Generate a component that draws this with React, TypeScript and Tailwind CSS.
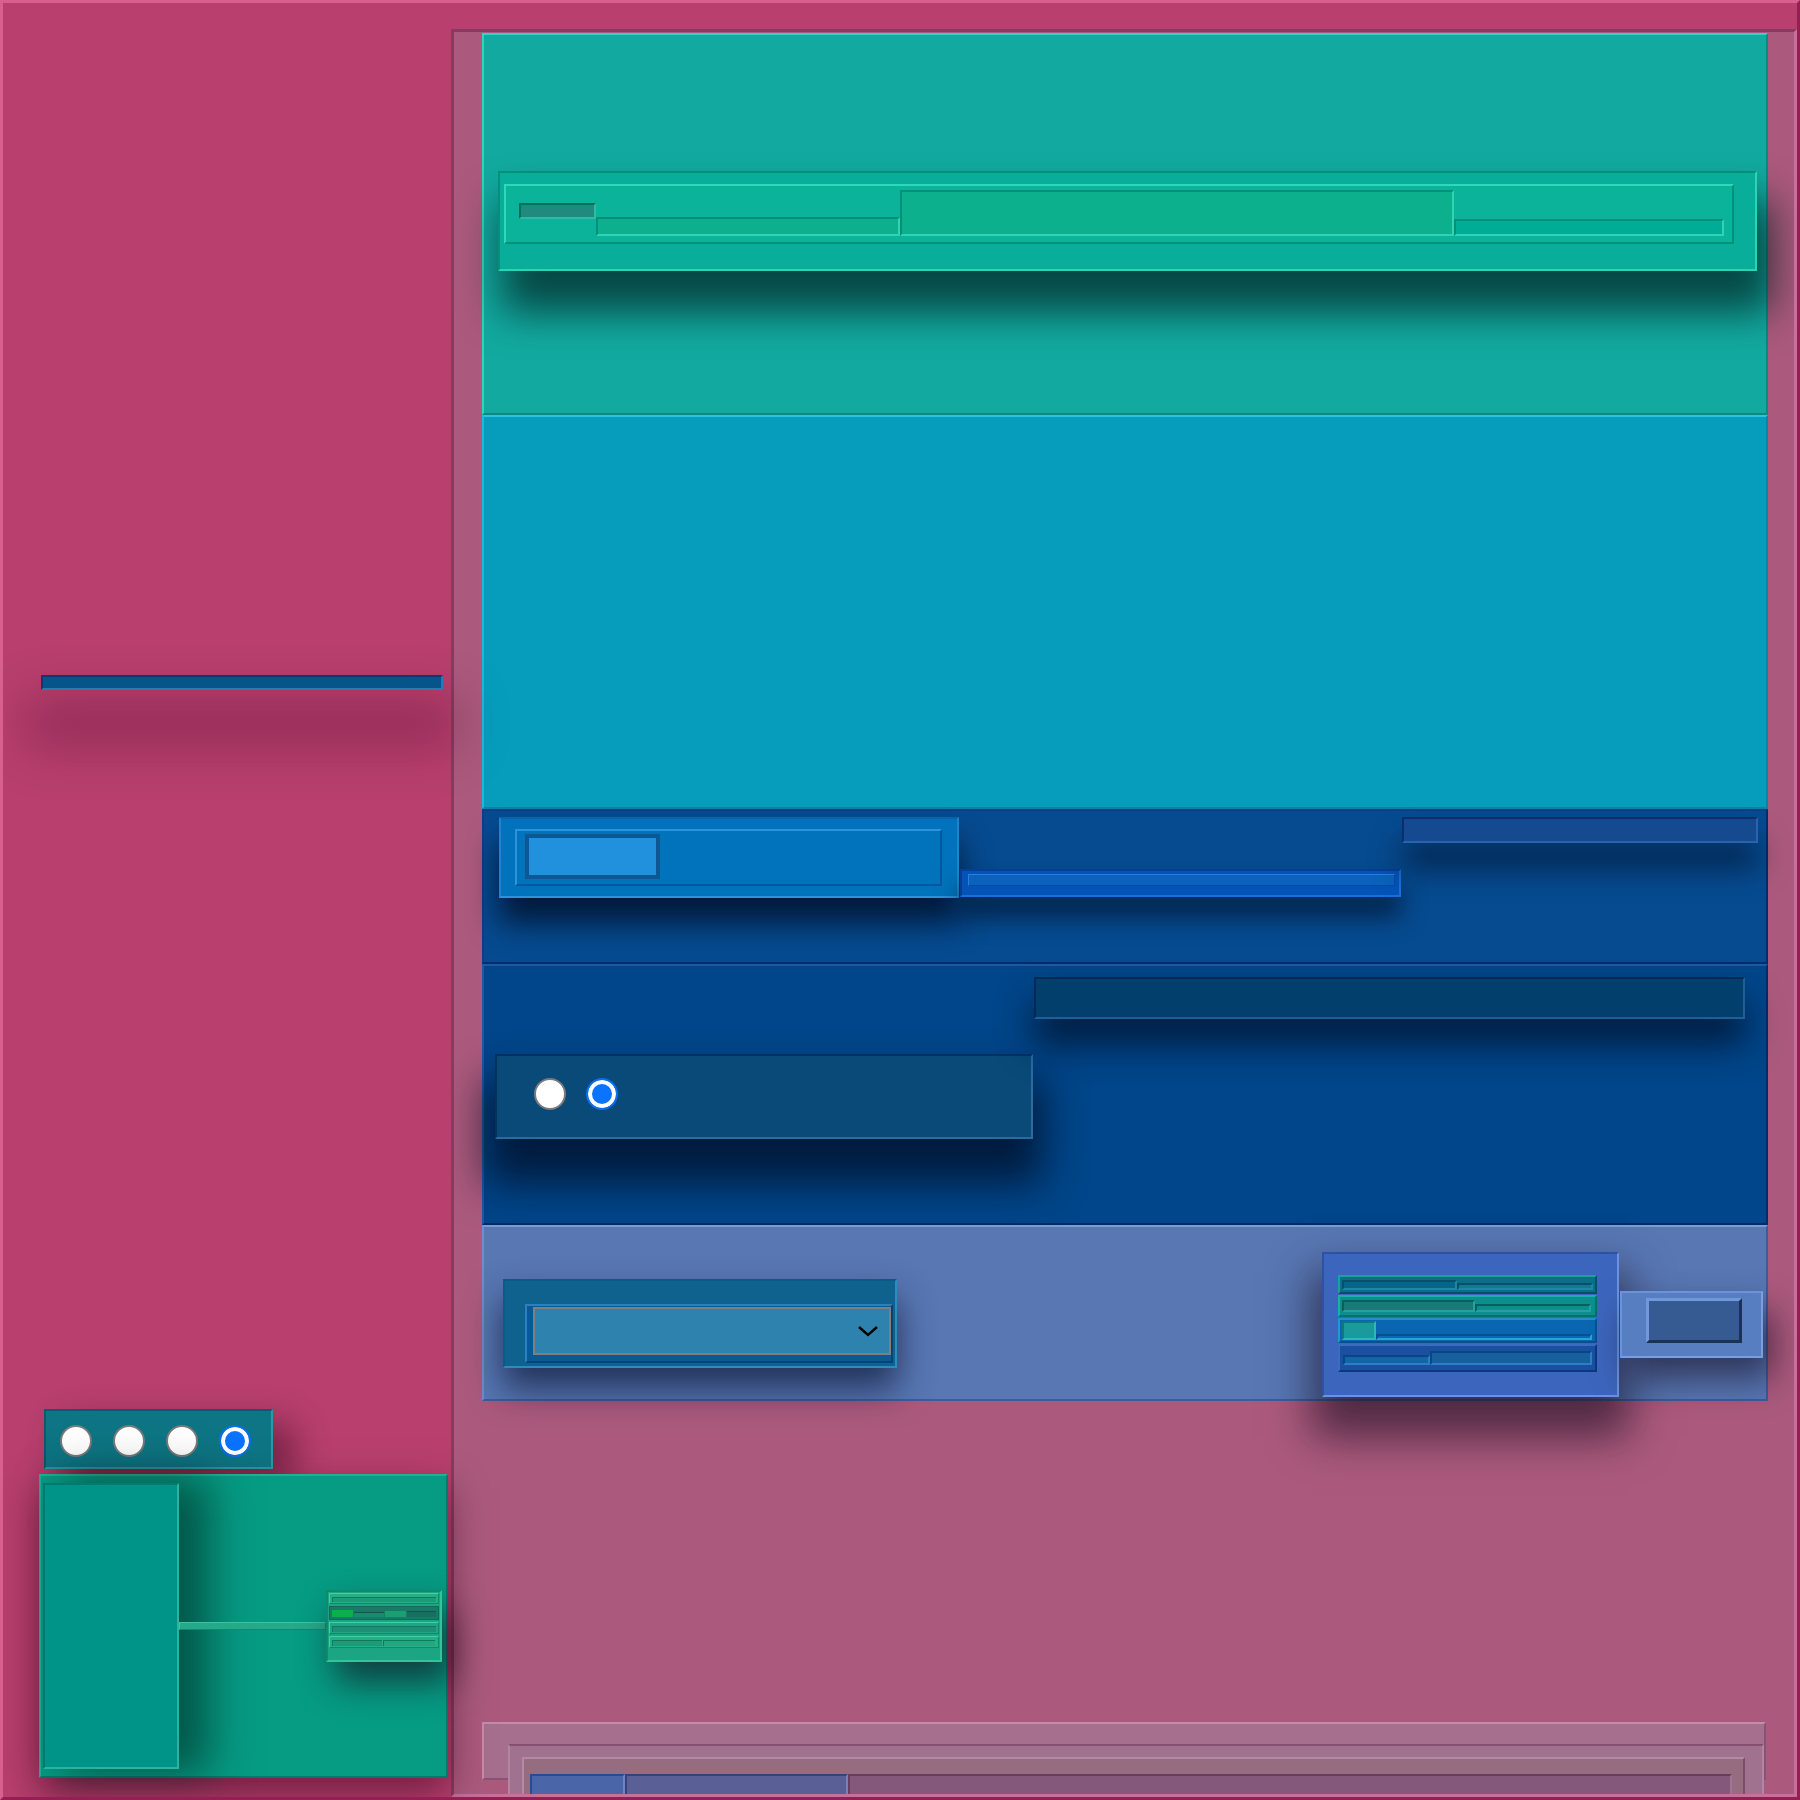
import React from "react";

function Radio({ on }: { on?: boolean }) {
  if (on) {
    return (
      <span className="block h-[32px] w-[32px] shrink-0 rounded-full border-2 border-[#0a6ef0] bg-[#0a73ff] shadow-[inset_0_0_0_4px_#ffffff]" />
    );
  }
  return <span className="block h-[32px] w-[32px] shrink-0 rounded-full border-2 border-[#7a7a7a] bg-white" />;
}

function LeftColumn() {
  return (
    <div className="relative z-10 flex w-[448px] shrink-0 flex-col">
      <div className="ml-[38px] mt-[672px] h-[15px] w-[402px] border-2 border-t-[#0b3a74] border-l-[#0b3a74] border-b-[#2a7ab2] border-r-[#2a7ab2] bg-[#06548a] shadow-[0_40px_50px_15px_rgba(70,10,40,0.35)]" />
      <div className="flex-1" />
      <div className="ml-[41px] flex h-[60px] w-[229px] items-center gap-[21px] border-2 border-t-[#0a5a70] border-l-[#0a5a70] border-b-[#2a9aa8] border-r-[#2a9aa8] bg-[#0e7584] pl-[14px] pt-[4px] shadow-[20px_15px_35px_rgba(40,0,20,0.45)]">
        <Radio />
        <Radio />
        <Radio />
        <Radio on />
      </div>
      <div className="mb-[19px] ml-[36px] mt-[5px] flex h-[304px] w-[409px] items-center border-2 border-t-[#1fb096] border-l-[#1fb096] border-b-[#057a68] border-r-[#057a68] bg-[#069b83] py-[7px] pl-[2px] shadow-[0_15px_35px_rgba(40,0,20,0.5)]">
        <div className="h-full w-[136px] shrink-0 self-stretch border-2 border-t-[#007a70] border-l-[#007a70] border-b-[#2ab3a3] border-r-[#2ab3a3] bg-[#009488] shadow-[25px_0_40px_5px_rgba(0,30,25,0.55)]" />
        <div className="h-[8px] w-[147px] shrink-0 border border-t-[#3cc49f] border-l-[#3cc49f] border-b-[#0d8a70] border-r-[#0d8a70] bg-[#25a98b]" />
        <div className="flex h-[72px] w-[116px] shrink-0 flex-col gap-[2px] border-2 border-t-[#0f8a6e] border-l-[#0f8a6e] border-b-[#35c39a] border-r-[#35c39a] bg-[#1ca583] p-[1px] shadow-[10px_20px_35px_rgba(20,0,20,0.6)]">
          <div className="flex h-[11px] items-end border border-t-[#3fd0a4] border-l-[#3fd0a4] border-b-[#0f8a6c] border-r-[#0f8a6c] bg-[#22b085] px-[2px] pb-[1px]">
            <div className="h-[5px] w-full border-t border-l border-t-[#0f7a60] border-l-[#0f7a60] bg-[#1f9a78]" />
          </div>
          <div className="flex h-[14px] items-end gap-[1px] border border-[#116a5a] bg-[#1a7a68] px-[2px] pb-[2px]">
            <div className="h-[7px] w-[22px] bg-[#0ab04a]" />
            <div className="h-[5px] w-[30px] border-t border-t-[#0c5a4a] bg-[#1a8a70]" />
            <div className="h-[6px] w-[22px] bg-[#1aa070]" />
            <div className="h-[6px] w-[30px] border-t border-t-[#0c5a4a] bg-[#157060]" />
          </div>
          <div className="flex h-[12px] items-end border border-t-[#3fd0a4] border-l-[#3fd0a4] border-b-[#0f8a6c] border-r-[#0f8a6c] bg-[#22a585] px-[2px] pb-[1px]">
            <div className="h-[6px] w-full border-t border-l border-t-[#0f7a60] border-l-[#0f7a60] bg-[#1f9075]" />
          </div>
          <div className="flex h-[12px] items-end gap-[1px] border border-t-[#3fd0a4] border-l-[#3fd0a4] border-b-[#0f8a6c] border-r-[#0f8a6c] bg-[#22b085] px-[2px] pb-[1px]">
            <div className="h-[6px] w-[50px] border-t border-l border-t-[#0f7a60] border-l-[#0f7a60] bg-[#1f9a78]" />
            <div className="h-[6px] w-[52px] border-t border-l border-t-[#0f7a60] border-l-[#0f7a60] bg-[#24a67e]" />
          </div>
        </div>
      </div>
    </div>
  );
}

function TealSection() {
  return (
    <div className="h-[382px] shrink-0 border-2 border-t-[#2fd3c3] border-l-[#2fd3c3] border-b-[#0c8a82] border-r-[#0c8a82] bg-[#12aaa0] pl-[14px] pt-[136px]">
      <div className="h-[100px] w-[1259px] border-2 border-t-[#00907c] border-l-[#00907c] border-b-[#2cd4b6] border-r-[#2cd4b6] bg-[#08ae9a] pl-[4px] pt-[11px] shadow-[10px_35px_40px_6px_rgba(0,30,30,0.7)]">
        <div className="flex h-[60px] w-[1230px] items-end border-2 border-t-[#30d8ba] border-l-[#30d8ba] border-b-[#00907b] border-r-[#00907b] bg-[#0ab39a] pb-[6px] pl-[13px]">
          <div className="mt-[17px] h-[16px] w-[77px] self-start border-2 border-t-[#03705e] border-l-[#03705e] border-b-[#34b8a4] border-r-[#34b8a4] bg-[#1f8a7e]" />
          <div className="h-[19px] w-[304px] border-2 border-t-[#019079] border-l-[#019079] border-b-[#2fd4b4] border-r-[#2fd4b4] bg-[#0cb08e]" />
          <div className="h-[46px] w-[554px] border-2 border-t-[#019079] border-l-[#019079] border-b-[#2fd4b4] border-r-[#2fd4b4] bg-[#0db08c]" />
          <div className="h-[17px] w-[270px] border-2 border-t-[#019079] border-l-[#019079] border-b-[#2fd4b4] border-r-[#2fd4b4] bg-[#00ac95]" />
        </div>
      </div>
    </div>
  );
}

function BlueSection() {
  return (
    <div className="flex h-[155px] shrink-0 items-start border-2 border-t-[#0e3f86] border-l-[#0e3f86] border-b-[#022d68] border-r-[#022d68] bg-[#064b90] pl-[15px] pt-[6px]">
      <div className="h-[81px] w-[460px] shrink-0 border-2 border-t-[#0a62a8] border-l-[#1b86cf] border-b-[#2a94da] border-r-[#1b86cf] bg-[#0173bc] pl-[14px] pt-[10px] shadow-[0_25px_30px_rgba(0,10,30,0.75)]">
        <div className="h-[57px] w-[427px] border-2 border-t-[#2b94dc] border-l-[#2b94dc] border-b-[#0558a0] border-r-[#0558a0] bg-[#0073bd] pl-[8px] pt-[3px]">
          <div className="h-[45px] w-[135px] border-[4px] border-[#0b5893] bg-[#2191dd]" />
        </div>
      </div>
      <div className="ml-[1px] mt-[52px] h-[28px] w-[441px] shrink-0 border-2 border-t-[#063e96] border-l-[#063e96] border-b-[#1b6fd2] border-r-[#1b6fd2] bg-[#0453b9] pl-[6px] pt-[3px] shadow-[0_20px_25px_rgba(0,10,30,0.6)]">
        <div className="h-[12px] w-[427px] border border-t-[#2a82d8] border-l-[#2a82d8] border-b-[#0848a0] border-r-[#0848a0] bg-[#0a62bc]" />
      </div>
      <div className="ml-[1px] h-[26px] w-[356px] shrink-0 border-2 border-t-[#0a2e6c] border-l-[#0a2e6c] border-b-[#2c62ac] border-r-[#2c62ac] bg-[#154a91] shadow-[0_25px_30px_rgba(0,10,30,0.6)]" />
    </div>
  );
}

function NavySection() {
  return (
    <div className="flex h-[261px] shrink-0 items-start border-2 border-t-[#1c5aa2] border-l-[#1c5aa2] border-b-[#012c66] border-r-[#012c66] bg-[#01468a] pl-[11px] pt-[11px]">
      <div className="mt-[77px] flex h-[85px] w-[538px] shrink-0 items-center gap-[20px] border-2 border-t-[#033260] border-l-[#033260] border-b-[#2b6ba0] border-r-[#2b6ba0] bg-[#094a78] pb-[6px] pl-[37px] shadow-[0_35px_40px_10px_rgba(0,10,30,0.7)]">
        <Radio />
        <Radio on />
      </div>
      <div className="ml-[1px] h-[42px] w-[711px] shrink-0 border-2 border-t-[#022a55] border-l-[#022a55] border-b-[#1f5f96] border-r-[#1f5f96] bg-[#033f6d] shadow-[0_25px_35px_rgba(0,10,30,0.7)]" />
    </div>
  );
}

function MiniList() {
  return (
    <div className="flex h-[97px] w-[259px] flex-col gap-[1px]">
      <div className="flex h-[19px] items-end border-2 border-t-[#17a3a3] border-l-[#17a3a3] border-b-[#0a4f66] border-r-[#0a4f66] bg-[#0c6f88] px-[2px] pb-[2px]">
        <div className="h-[10px] w-[115px] border-2 border-t-[#05506e] border-l-[#05506e] border-b-[#1a88a0] border-r-[#1a88a0] bg-[#06658a]" />
        <div className="h-[7px] w-[136px] border-2 border-t-[#05506e] border-l-[#05506e] border-b-[#1a88a0] border-r-[#1a88a0] bg-[#177791]" />
      </div>
      <div className="flex h-[23px] items-end border-2 border-t-[#1ab0a8] border-l-[#1ab0a8] border-b-[#06706a] border-r-[#06706a] bg-[#0a8e8e] px-[2px] pb-[3px]">
        <div className="h-[12px] w-[133px] border-2 border-t-[#0a5e5c] border-l-[#0a5e5c] border-b-[#22a3a0] border-r-[#22a3a0] bg-[#1a7a78]" />
        <div className="h-[8px] w-[116px] border-2 border-t-[#0a5e5c] border-l-[#0a5e5c] border-b-[#22a3a0] border-r-[#22a3a0] bg-[#0a8e8e]" />
      </div>
      <div className="flex h-[25px] items-end border-2 border-t-[#2a8ad0] border-l-[#1d9ccc] border-b-[#0a4f90] border-r-[#0a4f90] bg-[#0a66b0] px-[2px] pb-[1px]">
        <div className="h-[19px] w-[34px] border-2 border-t-[#0a7a80] border-l-[#0a7a80] border-b-[#2ab8b8] border-r-[#2ab8b8] bg-[#1a9a9c]" />
        <div className="h-[6px] w-[216px] border-2 border-t-[#0a4f90] border-l-[#0a4f90] border-b-[#24a6d4] border-r-[#24a6d4] bg-[#0d68b2]" />
      </div>
      <div className="flex h-[29px] items-end border-2 border-t-[#3a6cc0] border-l-[#3a6cc0] border-b-[#0c3782] border-r-[#0c3782] bg-[#1b4fa0] px-[3px] pb-[5px]">
        <div className="h-[10px] w-[87px] border-2 border-t-[#0a4585] border-l-[#0a4585] border-b-[#2a80c4] border-r-[#2a80c4] bg-[#1465a5]" />
        <div className="h-[14px] w-[162px] border-2 border-t-[#0a4585] border-l-[#0a4585] border-b-[#2a80c4] border-r-[#2a80c4] bg-[#185f9e]" />
      </div>
    </div>
  );
}

function LavenderSection() {
  return (
    <div className="flex h-[176px] shrink-0 items-start border-2 border-t-[#7d9ad2] border-l-[#6f8dca] border-b-[#3d5c9a] border-r-[#3d5c9a] bg-[#5877b3] pl-[19px] pr-[3px]">
      <div className="mt-[52px] h-[89px] w-[394px] shrink-0 border-2 border-t-[#0c5a88] border-l-[#0c5a88] border-b-[#2c8cc2] border-r-[#2c8cc2] bg-[#10628e] pl-[20px] pt-[23px] shadow-[0_20px_35px_rgba(10,20,50,0.7)]">
        <div className="h-[59px] w-[368px] border-2 border-t-[#2a80c0] border-l-[#2a80c0] border-b-[#004579] border-r-[#004579] bg-[#085a96] pl-[6px] pt-[1px]">
          <div className="flex h-[48px] w-[358px] items-center justify-end border-2 border-[#7f7f7f] bg-[#2d83ad] pr-[10px]">
            <svg width="22" height="14" viewBox="0 0 22 14" fill="none">
              <polyline points="2,3 11,11 20,3" stroke="#000000" strokeWidth="2.4" />
            </svg>
          </div>
        </div>
      </div>
      <div className="flex-1" />
      <div className="mt-[25px] h-[145px] w-[297px] shrink-0 border-2 border-t-[#2b52a8] border-l-[#2b52a8] border-b-[#6b92e2] border-r-[#6b92e2] bg-[#3c66bd] pl-[14px] pt-[21px] shadow-[0_30px_40px_10px_rgba(20,10,30,0.6)]">
        <MiniList />
      </div>
      <div className="ml-[1px] mt-[64px] h-[67px] w-[143px] shrink-0 border-2 border-t-[#6d92d6] border-l-[#6d92d6] border-b-[#7a9ee0] border-r-[#7a9ee0] bg-[#577ec0] pl-[24px] pt-[5px] shadow-[10px_20px_35px_rgba(20,10,30,0.6)]">
        <div className="h-[45px] w-[96px] border-[3px] border-t-[#7098dc] border-l-[#7098dc] border-b-[#1c3254] border-r-[#1c3254] bg-[#365b93]" />
      </div>
    </div>
  );
}

function BottomStack() {
  return (
    <div className="mt-[321px] h-[58px] w-[1284px] shrink-0 border-2 border-t-[#c38ca9] border-l-[#c38ca9] border-b-[#8a5274] border-r-[#8a5274] bg-[#a56f8d] pl-[24px] pt-[20px]">
      <div className="h-[80px] w-[1256px] border-2 border-t-[#88506f] border-l-[#b286a2] border-b-[#b286a2] border-r-[#b286a2] bg-[#a07290] pl-[12px] pt-[11px]">
        <div className="h-[60px] w-[1223px] border-2 border-t-[#b48aa0] border-l-[#b48aa0] border-b-[#7a5066] border-r-[#7a5066] bg-[#966c80] pl-[6px] pt-[15px]">
          <div className="flex h-[40px]">
            <div className="w-[95px] border-2 border-t-[#2c4a8e] border-l-[#2c4a8e] border-b-[#6a86c8] border-r-[#6a86c8] bg-[#4a66a8]" />
            <div className="w-[223px] border-2 border-t-[#3a4078] border-l-[#3a4078] border-b-[#7a80b8] border-r-[#7a80b8] bg-[#5a5f96]" />
            <div className="w-[884px] border-2 border-t-[#6a3c5e] border-l-[#6a3c5e] border-b-[#a07496] border-r-[#a07496] bg-[#83587a]" />
          </div>
        </div>
      </div>
    </div>
  );
}

export default function App() {
  return (
    <div className="flex h-[1800px] w-[1800px] overflow-hidden border-[3px] border-t-[#d8608f] border-l-[#d8608f] border-r-[#951f52] border-b-[#951f52] bg-[#b83f6e]">
      <LeftColumn />
      <div className="mt-[26px] flex min-w-0 flex-1 flex-col overflow-hidden border-[3px] border-t-[#8a3a5f] border-l-[#8a3a5f] border-b-[#c6709a] border-r-[#c6709a] bg-[#ab5a7d] pl-[28px] pr-[26px] pt-[1px]">
        <TealSection />
        <div className="h-[394px] shrink-0 border-2 border-t-[#2ac4de] border-l-[#1fb8d4] border-b-[#0a84a0] border-r-[#0a84a0] bg-[#069dbd]" />
        <BlueSection />
        <NavySection />
        <LavenderSection />
        <BottomStack />
      </div>
    </div>
  );
}
